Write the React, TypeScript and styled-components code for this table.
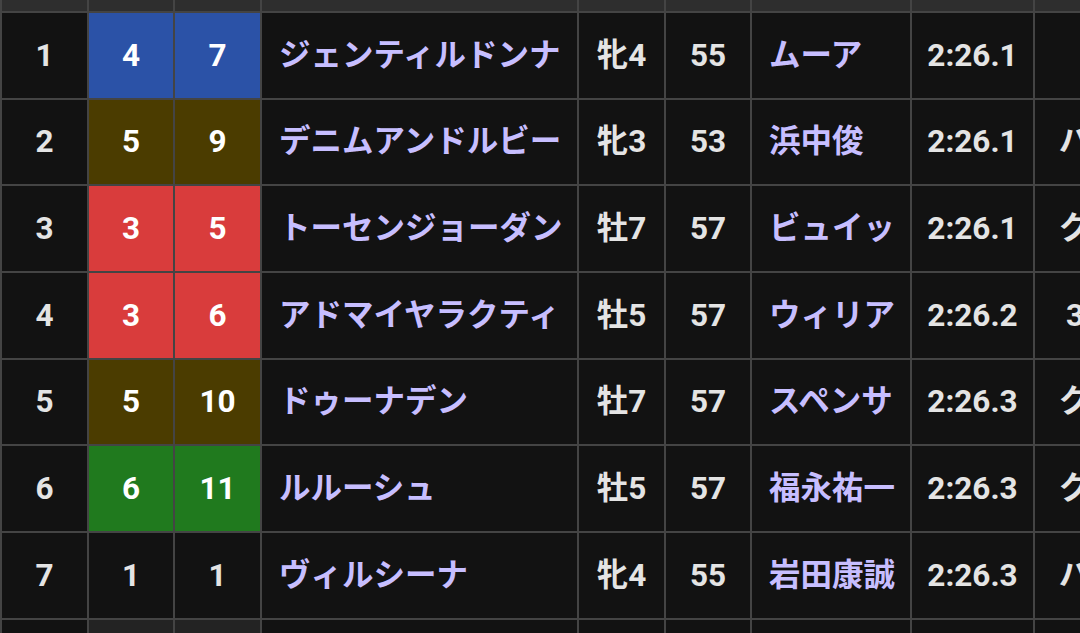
import React from 'react';
import styled, { createGlobalStyle } from 'styled-components';

type Result = {
  rank: number;
  gate: number;
  num: number;
  horse: string;
  sexAge: string;
  weight: number;
  jockey: string;
  time: string;
  margin: string;
};

const results: Result[] = [
  { rank: 1, gate: 4, num: 7, horse: 'ジェンティルドンナ', sexAge: '牝4', weight: 55, jockey: 'ムーア', time: '2:26.1', margin: '' },
  { rank: 2, gate: 5, num: 9, horse: 'デニムアンドルビー', sexAge: '牝3', weight: 53, jockey: '浜中俊', time: '2:26.1', margin: 'ハナ' },
  { rank: 3, gate: 3, num: 5, horse: 'トーセンジョーダン', sexAge: '牡7', weight: 57, jockey: 'ビュイッ', time: '2:26.1', margin: 'クビ' },
  { rank: 4, gate: 3, num: 6, horse: 'アドマイヤラクティ', sexAge: '牡5', weight: 57, jockey: 'ウィリア', time: '2:26.2', margin: '3/4' },
  { rank: 5, gate: 5, num: 10, horse: 'ドゥーナデン', sexAge: '牡7', weight: 57, jockey: 'スペンサ', time: '2:26.3', margin: 'クビ' },
  { rank: 6, gate: 6, num: 11, horse: 'ルルーシュ', sexAge: '牡5', weight: 57, jockey: '福永祐一', time: '2:26.3', margin: 'クビ' },
  { rank: 7, gate: 1, num: 1, horse: 'ヴィルシーナ', sexAge: '牝4', weight: 55, jockey: '岩田康誠', time: '2:26.3', margin: 'ハナ' },
  { rank: 8, gate: 2, num: 3, horse: 'ラブイズブーシェ', sexAge: '牡4', weight: 57, jockey: '内田博幸', time: '2:26.4', margin: 'クビ' },
];

// 枠の色 (1枠は白 → ダーク表示では通常背景)
const gateColors: Record<number, string> = {
  1: '#121212',
  2: '#232323',
  3: '#d93c3c',
  4: '#2b52a7',
  5: '#4b3c00',
  6: '#207a1e',
  7: '#d9842a',
  8: '#d9569a',
};

const GlobalStyle = createGlobalStyle`
  html, body {
    margin: 0;
    padding: 0;
    background: #121212;
    overflow: hidden;
  }
  body {
    font-family: Roboto, "Noto Sans CJK JP", sans-serif;
  }
`;

const Page = styled.div`
  width: 1080px;
  height: 633px;
  overflow: hidden;
`;

const Table = styled.div`
  display: flex;
  flex-direction: column;
  gap: 2px;
  width: max-content;
  padding: 0 2px 2px;
  margin-top: -73.67px;
  background: #444444;
`;

const Row = styled.div`
  display: grid;
  grid-template-columns: 85px 84px 85px 315px 85px 84px 158px 121px 110px;
  gap: 2px;
  height: 84.67px;
`;

const Cell = styled.div<{ $bg?: string; $align?: 'left' | 'center' }>`
  display: flex;
  align-items: center;
  justify-content: ${(p) => (p.$align === 'left' ? 'flex-start' : 'center')};
  padding: ${(p) => (p.$align === 'left' ? '0 0 0 17px' : '0')};
  background: ${(p) => p.$bg || '#121212'};
  color: #e4e4e4;
  font-size: 31.5px;
  line-height: 1;
  font-weight: 700;
  white-space: nowrap;
  overflow: hidden;
`;

const HeadCell = styled(Cell)`
  background: #2e2e2e;
  font-size: 26px;
`;

const GateCell = styled(Cell)<{ $colored: boolean }>`
  color: ${(p) => (p.$colored ? '#ffffff' : '#e4e4e4')};
`;

const NameCell = styled(Cell)`
  color: #c7beff;
`;

const headers = ['着順', '枠', '馬番', '馬名', '性齢', '斤量', '騎手', 'タイム', '着差'];

export default function App() {
  return (
    <Page>
      <GlobalStyle />
      <Table>
        <Row>
          {headers.map((h) => (
            <HeadCell key={h}>{h}</HeadCell>
          ))}
        </Row>
        {results.map((r) => {
          const colored = r.gate > 2;
          return (
            <Row key={r.rank}>
              <Cell>{r.rank}</Cell>
              <GateCell $bg={gateColors[r.gate]} $colored={colored}>{r.gate}</GateCell>
              <GateCell $bg={gateColors[r.gate]} $colored={colored}>{r.num}</GateCell>
              <NameCell $align="left">{r.horse}</NameCell>
              <Cell>{r.sexAge}</Cell>
              <Cell>{r.weight}</Cell>
              <NameCell $align="left">{r.jockey}</NameCell>
              <Cell>{r.time}</Cell>
              <Cell>{r.margin}</Cell>
            </Row>
          );
        })}
      </Table>
    </Page>
  );
}
